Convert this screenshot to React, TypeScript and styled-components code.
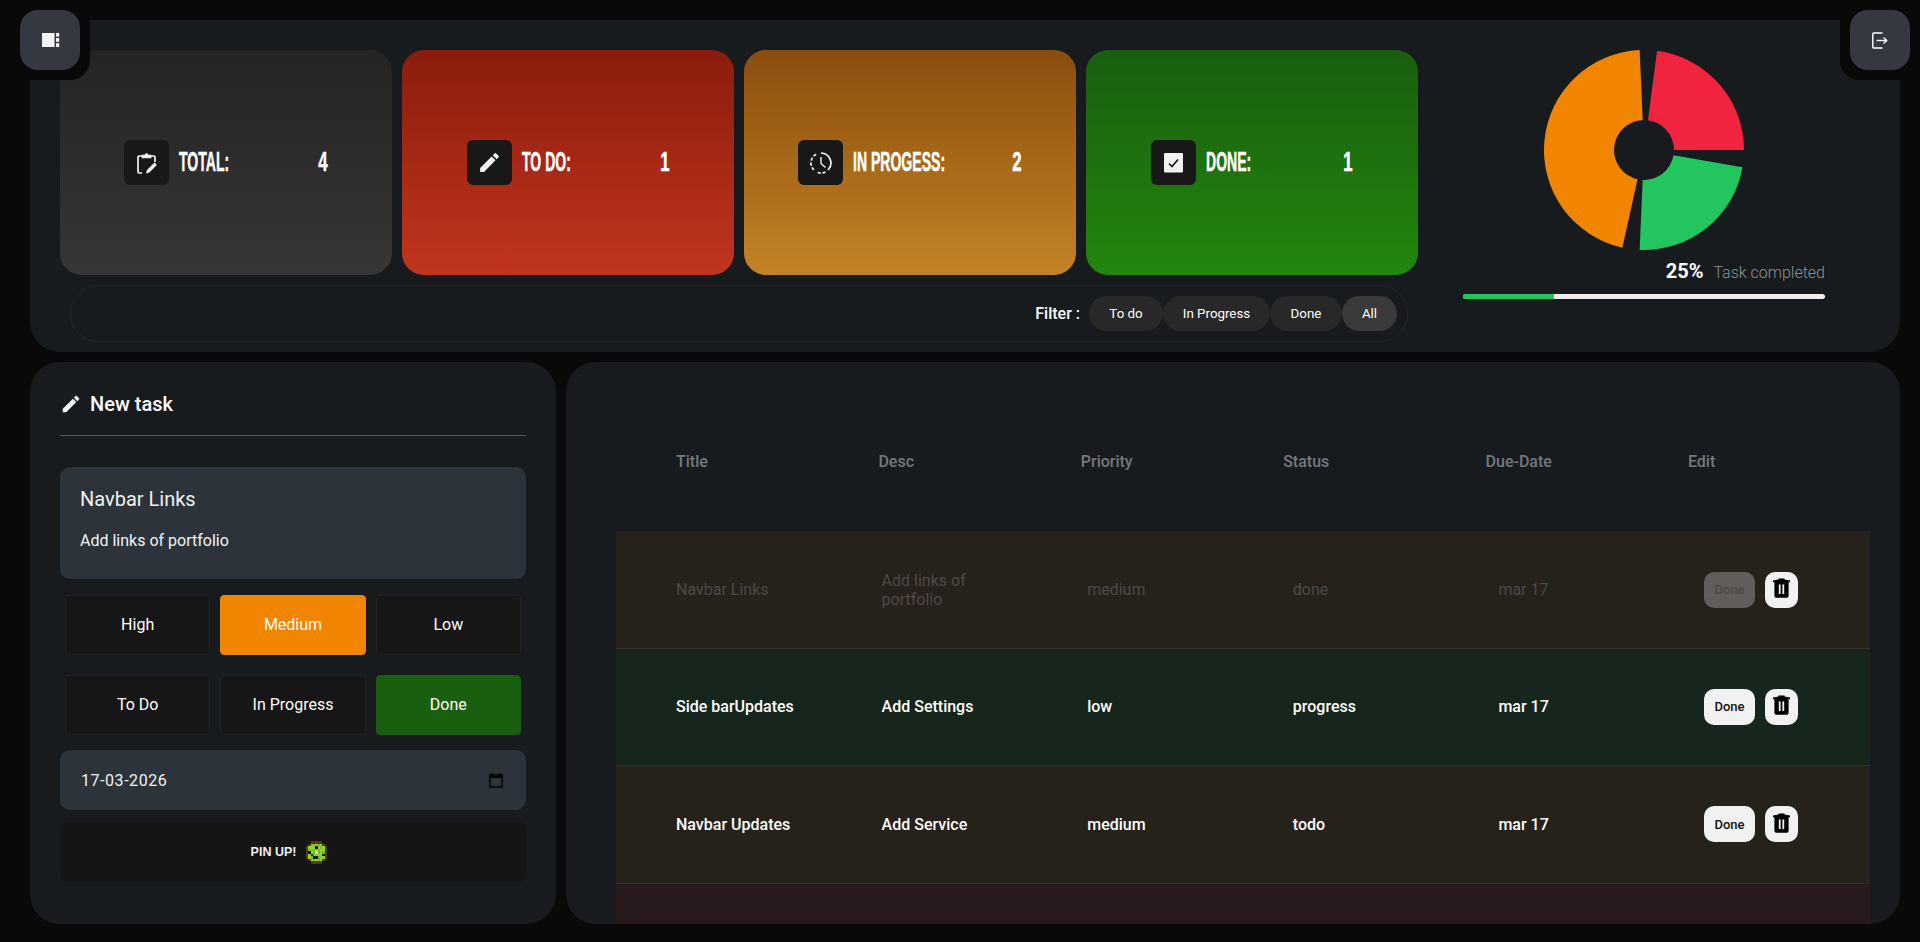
import React, { FunctionComponent } from 'react';
import styled, { createGlobalStyle } from 'styled-components';
import { MdEdit } from 'react-icons/md';

const GlobalStyle = createGlobalStyle`
  html, body {
    margin: 0;
    padding: 0;
    background: #090909;
    font-family: Roboto, "Liberation Sans", sans-serif;
    color: #fff;
  }
  * {
    box-sizing: border-box;
  }
`;

const Page = styled.div`
  position: relative;
  width: 1920px;
  height: 942px;
  overflow: hidden;
  padding: 20px 20px 18px 30px;
  display: flex;
  flex-direction: column;
  gap: 10px;
`;

const Corner = styled.div<{ $side: 'left' | 'right' }>`
  position: absolute;
  top: 0;
  ${(p) => (p.$side === 'left' ? 'left: 0; padding: 10px 10px 10px 20px;' : 'right: 0; padding: 10px 10px 10px 10px;')}
  background: #090909;
  border-radius: ${(p) => (p.$side === 'left' ? '0 0 20px 0' : '0 0 0 20px')};
`;

const CornerButton = styled.div`
  width: 60px;
  height: 60px;
  border-radius: 18px;
  background: #343841;
  display: flex;
  align-items: center;
  justify-content: center;
`;

const TopPanel = styled.section`
  height: 332px;
  border-radius: 30px;
  background: #171b1e;
  padding: 30px 0 0 30px;
  display: flex;
`;

const Overview = styled.div`
  width: 1358px;
`;

const Cards = styled.div`
  display: flex;
  gap: 10px;
`;

const Card = styled.div<{ $from: string; $to: string; $pad: number }>`
  width: 332px;
  height: 225px;
  border-radius: 22px;
  background: linear-gradient(180deg, ${(p) => p.$from}, ${(p) => p.$to});
  display: flex;
  align-items: center;
  padding-left: ${(p) => p.$pad}px;
`;

const CardIcon = styled.div`
  width: 45px;
  height: 45px;
  border-radius: 6px;
  background: #181818;
  display: flex;
  align-items: center;
  justify-content: center;
  margin-right: 10px;
  flex-shrink: 0;
`;

const CardLabel = styled.div<{ $slot: number }>`
  width: ${(p) => p.$slot}px;
  font-family: "Liberation Sans Narrow", "Liberation Sans", sans-serif;
  font-weight: 700;
  font-size: 27px;
  white-space: nowrap;
  transform: scaleX(0.52);
  transform-origin: left center;
  text-transform: uppercase;
  -webkit-text-stroke: 0.5px #fff;
`;

const CardValue = styled(CardLabel)`
  width: 28px;
  text-align: center;
  transform: scaleX(0.62);
  transform-origin: center;
`;

const FilterBar = styled.div`
  margin: 10px 0 0 10px;
  width: 1338px;
  height: 57px;
  border: 1px solid #23282c;
  border-radius: 28px;
  display: flex;
  align-items: center;
  justify-content: flex-end;
  padding-right: 10px;
`;

const FilterLabel = styled.span`
  font-size: 16px;
  font-weight: 500;
  margin-right: 9px;
`;

const FilterChip = styled.div<{ $width: number; $active?: boolean }>`
  width: ${(p) => p.$width}px;
  height: 35px;
  border-radius: 18px;
  background: ${(p) => (p.$active ? '#3a3a3a' : '#282828')};
  display: flex;
  align-items: center;
  justify-content: center;
  font-size: 13.33px;
`;

const Summary = styled.div`
  width: 362px;
  margin-left: 45px;
  display: flex;
  flex-direction: column;
`;

const PieWrap = styled.div`
  display: flex;
  justify-content: center;
  height: 200px;
`;

const CompletedLine = styled.div`
  display: flex;
  justify-content: flex-end;
  align-items: baseline;
  gap: 10px;
  margin-top: 9px;
  height: 24px;
`;

const Percent = styled.span`
  font-size: 20px;
  font-weight: 700;
`;

const CompletedText = styled.span`
  font-size: 16px;
  font-weight: 300;
  color: #8d9297;
`;

const Progress = styled.div`
  margin-top: 11px;
  height: 5px;
  border-radius: 3px;
  background: #eeeeee;
  overflow: hidden;
`;

const ProgressFill = styled.div`
  height: 100%;
  background: #22c55e;
`;

const BottomRow = styled.div`
  flex: 1;
  display: flex;
  gap: 10px;
  min-height: 0;
`;

const FormPanel = styled.section`
  width: 526px;
  border-radius: 30px;
  background: #171b1e;
  padding: 0 30px;
`;

const FormHeader = styled.div`
  height: 74px;
  padding-top: 30px;
  border-bottom: 1px solid #55585b;
  display: flex;
  align-items: flex-start;
  gap: 8px;
  font-size: 20px;
  font-weight: 500;
  line-height: 24px;
`;

const NoteBox = styled.div`
  margin-top: 31px;
  height: 112px;
  border-radius: 10px;
  background: #2c333a;
  padding: 20px;
`;

const NoteTitle = styled.div`
  font-size: 20px;
  line-height: 24px;
  color: #f2f2f2;
`;

const NoteDesc = styled.div`
  margin-top: 20px;
  font-size: 16px;
  line-height: 20px;
  color: #f2f2f2;
`;

const Choices = styled.div`
  display: grid;
  grid-template-columns: repeat(3, 1fr);
  gap: 20px 10px;
  padding: 0 5px;
  margin-top: 16px;
`;

const Choice = styled.div<{ $bg?: string }>`
  height: 60px;
  padding-bottom: 1px;
  border-radius: 4px;
  background: ${(p) => p.$bg || '#161616'};
  border: 1px solid ${(p) => p.$bg || '#212427'};
  display: flex;
  align-items: center;
  justify-content: center;
  font-size: 16px;
`;

const DateBox = styled.div`
  margin-top: 15px;
  height: 60px;
  border-radius: 10px;
  background: #2c333a;
  padding: 0 23px 0 21px;
  display: flex;
  align-items: center;
  justify-content: space-between;
  font-size: 16px;
  color: #f2f2f2;
  letter-spacing: 0.55px;
`;

const PinButton = styled.div`
  margin-top: 12px;
  height: 60px;
  border-radius: 8px;
  background: #151515;
  display: flex;
  align-items: center;
  justify-content: center;
  gap: 10px;
  padding-right: 8px;
  font-family: "Liberation Sans", sans-serif;
  font-size: 12.5px;
  font-weight: 700;
  color: #f0f0f0;
`;

const TablePanel = styled.section`
  flex: 1;
  border-radius: 30px;
  background: #171b1e;
  padding-left: 50px;
  padding-right: 30px;
  overflow: hidden;
`;

const TableHead = styled.div`
  height: 169.4px;
  padding: 89px 0 0 60px;
  display: grid;
  grid-template-columns: repeat(6, 202.4px);
  align-items: start;
  font-size: 16px;
  font-weight: 500;
  line-height: 22px;
  color: #74787c;
`;

const Row = styled.div<{ $bg: string; $muted?: boolean }>`
  height: 117.4px;
  background: ${(p) => p.$bg};
  border-bottom: 1px solid rgba(255, 255, 255, 0.07);
  padding-left: 60px;
  display: grid;
  grid-template-columns: repeat(6, 205.6px);
  align-items: center;
  font-size: 16px;
  line-height: 19px;
  font-weight: ${(p) => (p.$muted ? 400 : 500)};
  color: ${(p) => (p.$muted ? '#4c4a47' : '#ffffff')};
`;

const DescCell = styled.div`
  max-width: 120px;
`;

const Actions = styled.div`
  display: flex;
  gap: 10px;
`;

const DoneButton = styled.div<{ $muted?: boolean }>`
  width: 51px;
  height: 36px;
  border-radius: 10px;
  background: ${(p) => (p.$muted ? '#625d5a' : '#f1f1f1')};
  color: ${(p) => (p.$muted ? '#4c4a47' : '#111')};
  display: flex;
  align-items: center;
  justify-content: center;
  font-size: 13px;
  font-weight: 500;
`;

const TrashButton = styled.div`
  width: 33px;
  height: 36px;
  border-radius: 10px;
  background: #f1f1f1;
  display: flex;
  align-items: center;
  justify-content: center;
  padding-bottom: 3px;
`;

const PanelIcon = () => (
  <svg width="18" height="14" viewBox="0 0 18 14" fill="#f2f2f2" style={{ marginLeft: 1 }}>
    <rect x="0" y="0" width="12.5" height="14" />
    <rect x="14" y="0" width="3.2" height="3.6" />
    <rect x="14" y="5" width="3.2" height="3.8" />
    <rect x="14" y="10.2" width="3.2" height="3.8" />
  </svg>
);

const ExitIcon = () => (
  <svg width="16" height="17" viewBox="0 0 16 17" fill="none" stroke="#fff" strokeWidth="1.4" strokeLinejoin="round">
    <path d="M10.5 1H1.8A1 1 0 0 0 .8 2v13a1 1 0 0 0 1 1h8.7" />
    <path d="M4.5 8.5H14.5" />
    <path d="M11.5 5.5L14.8 8.5L11.5 11.5" />
  </svg>
);

const ClipboardIcon = () => (
  <svg width="22" height="22" viewBox="0 0 22 22" fill="none" stroke="#f2f2f2" strokeWidth="1.7">
    <path d="M6 4H3.2C2.4 4 2 4.5 2 5.2v14.6c0 .7.4 1.2 1.2 1.2H6" />
    <path d="M15 4h2.8c.8 0 1.2.5 1.2 1.2V10" />
    <path d="M6.5 5.5V3.5H9.3C9.5 1.6 11.5 1.6 11.7 3.5H14.5v2z" fill="#f2f2f2" />
    <path d="M10 21.5l1-3.4 7.5-7.5 2.4 2.4-7.5 7.5z" fill="#f2f2f2" stroke="none" />
  </svg>
);

const ClockIcon = () => (
  <svg width="22" height="22" viewBox="0 0 22 22" fill="none" stroke="#f2f2f2" strokeWidth="1.7">
    <path d="M11 1a10 10 0 0 1 7 17" />
    <path d="M15.5 20a10 10 0 0 1-9 0" strokeDasharray="3.2 1.6" />
    <path d="M3.8 18A10 10 0 0 1 7.5 1.6" strokeDasharray="3.2 1.8" />
    <path d="M11 5V11.5L15.5 15.5" strokeWidth="1.4" />
  </svg>
);

const CheckIcon = () => (
  <svg width="19" height="20" viewBox="0 0 19 20">
    <rect x="0" y="0" width="19" height="19.5" rx="1" fill="#f2f2f2" />
    <path d="M5 10.5l3 3 6-7" fill="none" stroke="#181818" strokeWidth="1.6" />
  </svg>
);

const TrashIcon = () => (
  <svg width="17" height="20" viewBox="0 0 17 20">
    <path d="M0 2.6L5.5 1.4V.6h6v.8L17 2.6v1.6H0z" fill="#000" />
    <path d="M1.4 3.8h14.2V17.4c0 1.4-1 2.4-2.4 2.4H3.8c-1.4 0-2.4-1-2.4-2.4z" fill="#000" />
    <rect x="5.8" y="6.4" width="1.8" height="9.6" fill="#f1f1f1" />
    <rect x="9.4" y="6.4" width="1.8" height="9.6" fill="#f1f1f1" />
  </svg>
);

const CalendarIcon = () => (
  <svg width="14" height="15" viewBox="0 0 14 15" fill="none">
    <path d="M3 0v2M11 0v2" stroke="#000" strokeWidth="1.4" />
    <rect x="0.8" y="2" width="12.4" height="12" stroke="#000" strokeWidth="1.5" />
    <rect x="0.8" y="2" width="12.4" height="3" fill="#000" />
  </svg>
);

const bugRows = [
  '..bbbbb..',
  '.bgGgGgb.',
  'bgggkgGgb',
  'bGgGgGggb',
  'bkgGwGgGb',
  'bgkGgggkb',
  'bgGkkGggb',
  '.bgGgGgb.',
  '..bbbbb..',
];
const bugColors: Record<string, string> = {
  b: '#5a3a0c',
  g: '#8fd12f',
  G: '#76b828',
  k: '#0f1a04',
  w: '#d8e8a0',
};

const PixelBug = () => (
  <svg width="21" height="23" viewBox="0 0 9 9" shapeRendering="crispEdges" preserveAspectRatio="none">
    {bugRows.flatMap((row, y) =>
      row.split('').map((c, x) => (c === '.' ? null : <rect key={`${x}-${y}`} x={x} y={y} width="1" height="1" fill={bugColors[c]} />))
    )}
  </svg>
);

const polar = (r: number, deg: number) => {
  const a = (deg * Math.PI) / 180;
  return `${100 + r * Math.cos(a)} ${100 - r * Math.sin(a)}`;
};

const slice = (start: number, end: number) => {
  const large = end - start > 180 ? 1 : 0;
  return `M${polar(100, start)}A100 100 0 ${large} 0 ${polar(100, end)}L${polar(30, end)}A30 30 0 ${large} 1 ${polar(30, start)}Z`;
};

const Pie = () => (
  <svg width="200" height="200" viewBox="0 0 200 200">
    <path d={slice(0, 82.5)} fill="#f1243f" />
    <path d={slice(92.5, 257.5)} fill="#f28500" />
    <path d={slice(267.5, 350)} fill="#22c55e" />
  </svg>
);

interface TaskRowProps {
  bg: string;
  title: string;
  desc: string;
  priority: string;
  status: string;
  due: string;
  muted?: boolean;
}

const TaskRow: FunctionComponent<TaskRowProps> = ({ bg, title, desc, priority, status, due, muted }) => (
  <Row $bg={bg} $muted={muted}>
    <div>{title}</div>
    <DescCell>{desc}</DescCell>
    <div>{priority}</div>
    <div>{status}</div>
    <div>{due}</div>
    <Actions>
      <DoneButton $muted={muted}>Done</DoneButton>
      <TrashButton>
        <TrashIcon />
      </TrashButton>
    </Actions>
  </Row>
);

const App = () => (
  <Page>
    <GlobalStyle />
    <Corner $side="left">
      <CornerButton>
        <PanelIcon />
      </CornerButton>
    </Corner>
    <Corner $side="right">
      <CornerButton>
        <ExitIcon />
      </CornerButton>
    </Corner>

    <TopPanel>
      <Overview>
        <Cards>
          <Card $from="#242424" $to="#363636" $pad={64}>
            <CardIcon><ClipboardIcon /></CardIcon>
            <CardLabel $slot={130}>Total:</CardLabel>
            <CardValue $slot={28}>4</CardValue>
          </Card>
          <Card $from="#8a1c0d" $to="#c2351f" $pad={65}>
            <CardIcon><MdEdit size={25} color="#f2f2f2" /></CardIcon>
            <CardLabel $slot={129}>To do:</CardLabel>
            <CardValue $slot={28}>1</CardValue>
          </Card>
          <Card $from="#8b4d0e" $to="#c38324" $pad={54}>
            <CardIcon><ClockIcon /></CardIcon>
            <CardLabel $slot={150}>In Progess:</CardLabel>
            <CardValue $slot={28}>2</CardValue>
          </Card>
          <Card $from="#1a5e10" $to="#22860c" $pad={65}>
            <CardIcon><CheckIcon /></CardIcon>
            <CardLabel $slot={128}>Done:</CardLabel>
            <CardValue $slot={28}>1</CardValue>
          </Card>
        </Cards>
        <FilterBar>
          <FilterLabel>Filter :</FilterLabel>
          <FilterChip $width={74}>To do</FilterChip>
          <FilterChip $width={107}>In Progress</FilterChip>
          <FilterChip $width={72}>Done</FilterChip>
          <FilterChip $width={55} $active>All</FilterChip>
        </FilterBar>
      </Overview>
      <Summary>
        <PieWrap>
          <Pie />
        </PieWrap>
        <CompletedLine>
          <Percent>25%</Percent>
          <CompletedText>Task completed</CompletedText>
        </CompletedLine>
        <Progress>
          <ProgressFill style={{ width: '25%' }} />
        </Progress>
      </Summary>
    </TopPanel>

    <BottomRow>
      <FormPanel>
        <FormHeader>
          <MdEdit size={22} color="#f2f2f2" style={{ marginTop: 1 }} />
          New task
        </FormHeader>
        <NoteBox>
          <NoteTitle>Navbar Links</NoteTitle>
          <NoteDesc>Add links of portfolio</NoteDesc>
        </NoteBox>
        <Choices>
          <Choice>High</Choice>
          <Choice $bg="#f28500">Medium</Choice>
          <Choice>Low</Choice>
          <Choice>To Do</Choice>
          <Choice>In Progress</Choice>
          <Choice $bg="#1a5e10">Done</Choice>
        </Choices>
        <DateBox>
          17-03-2026
          <CalendarIcon />
        </DateBox>
        <PinButton>
          PIN UP!
          <PixelBug />
        </PinButton>
      </FormPanel>

      <TablePanel>
        <TableHead>
          <div>Title</div>
          <div>Desc</div>
          <div>Priority</div>
          <div>Status</div>
          <div>Due-Date</div>
          <div>Edit</div>
        </TableHead>
        <TaskRow bg="#27211b" title="Navbar Links" desc="Add links of portfolio" priority="medium" status="done" due="mar 17" muted />
        <TaskRow bg="#17261d" title="Side barUpdates" desc="Add Settings" priority="low" status="progress" due="mar 17" />
        <TaskRow bg="#27211b" title="Navbar Updates" desc="Add Service" priority="medium" status="todo" due="mar 17" />
        <Row $bg="#28191c" />
      </TablePanel>
    </BottomRow>
  </Page>
);

export default App;
